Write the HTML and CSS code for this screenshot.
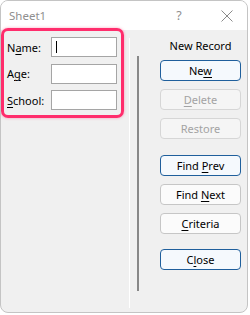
FILE: index.html
```html
<!DOCTYPE html>
<html>
<head>
<meta charset="utf-8">
<link rel="stylesheet" href="styles.css">
</head>
<body>
<div class="window">
  <div class="titlebar">
    <span class="title">Sheet1</span>
    <span class="help">?</span>
    <span class="close-x">
      <svg width="12" height="12" viewBox="0 0 12 12"><path d="M0.5 0.5 L11.5 11.5 M11.5 0.5 L0.5 11.5" stroke="#8a8a8a" stroke-width="1" fill="none"/></svg>
    </span>
  </div>
  <div class="content">
    <div class="left">
      <div class="highlight">
        <div class="row"><label>N<u>a</u>me:</label><div class="input"><span class="caret"></span></div></div>
        <div class="row"><label>A<u>g</u>e:</label><div class="input"></div></div>
        <div class="row"><label><u>S</u>chool:</label><div class="input"></div></div>
      </div>
    </div>
    <div class="vline-white"></div>
    <div class="vline-dark"></div>
    <div class="buttons">
      <div class="heading">New Record</div>
      <div class="btn default"><span>Ne<u>w</u></span></div>
      <div class="btn disabled"><span><u>D</u>elete</span></div>
      <div class="btn disabled"><span>Restore</span></div>
      <div class="btn default group"><span>Find <u>P</u>rev</span></div>
      <div class="btn"><span>Find <u>N</u>ext</span></div>
      <div class="btn"><span><u>C</u>riteria</span></div>
      <div class="btn default group2"><span>C<u>l</u>ose</span></div>
    </div>
  </div>
</div>
</body>
</html>
```
FILE: styles.css
```css
html, body {
  margin: 0;
  padding: 0;
  background: #ffffff;
}
body {
  font-family: "Segoe UI", "Noto Sans", sans-serif;
  font-size: 11px;
  color: #000;
}
.window {
  width: 248px;
  height: 313px;
  box-sizing: border-box;
  border: 1px solid #c4c4c4;
  border-radius: 8px;
  overflow: hidden;
  background: #f0f0f0;
  display: flex;
  flex-direction: column;
}
.titlebar {
  height: 29px;
  background: #ffffff;
  display: flex;
  align-items: center;
  flex-shrink: 0;
}
.title {
  margin-left: 8px;
  color: #8f8f8f;
  font-size: 11.5px;
  flex: 1;
}
.help {
  color: #8f8f8f;
  font-size: 12.5px;
  width: 12px;
  text-align: center;
  margin-right: 36px;
}
.close-x {
  display: flex;
  margin-right: 14px;
}
.content {
  flex: 1;
  display: flex;
}
.left {
  width: 123px;
}
.highlight {
  margin-top: -2px;
  height: 90px;
  box-sizing: border-box;
  border: 3px solid #ff2d6c;
  border-radius: 7px;
  box-shadow: 0 0 3px rgba(255, 45, 108, 0.45);
  padding: 6px 0 0 3px;
  display: flex;
  flex-direction: column;
  gap: 6.5px;
}
.row {
  display: flex;
  align-items: center;
  height: 20px;
}
.row label {
  width: 44px;
}
.row u, .btn u {
  text-decoration-thickness: 1px;
  text-underline-offset: 2px;
}
.input {
  width: 66px;
  height: 20px;
  box-sizing: border-box;
  border: 1px solid #a5a5a5;
  background: #fff;
  position: relative;
}
.caret {
  position: absolute;
  left: 4px;
  top: 3px;
  width: 1px;
  height: 12px;
  background: #000;
}
.vline-white {
  width: 1px;
  background: #ffffff;
  margin: 8px 0 4px 5px;
}
.vline-dark {
  width: 2px;
  background: #888888;
  margin: 26px 0 21px 7px;
}
.buttons {
  margin-left: 21px;
  width: 81px;
  padding-top: 8px;
  display: flex;
  flex-direction: column;
  gap: 8px;
}
.heading {
  text-align: center;
  line-height: 16px;
  margin-bottom: -2px;
}
.btn {
  height: 21px;
  box-sizing: border-box;
  border: 1px solid #c6c6c6;
  border-radius: 4px;
  background: #fbfbfb;
  display: flex;
  align-items: center;
  justify-content: center;
}
.btn.default {
  border-color: #1f5f9c;
  background: #f5f9fd;
}
.btn.disabled {
  border-color: #d6d6d6;
  background: #f5f5f5;
  color: #a3a3a3;
}
.btn.group {
  margin-top: 8px;
}
.btn.group2 {
  margin-top: 7px;
}
```
